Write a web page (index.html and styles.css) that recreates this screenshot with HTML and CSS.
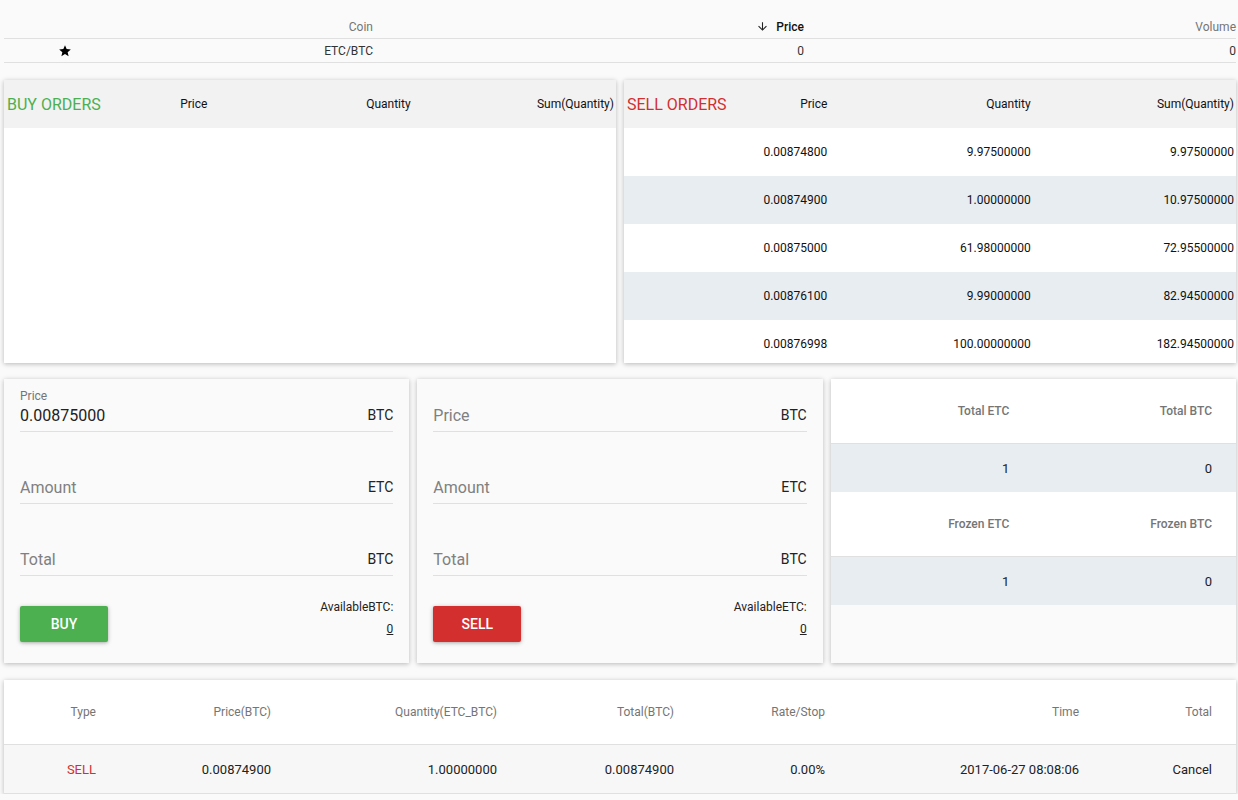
FILE: index.html
```html
<!DOCTYPE html>
<html>
<head>
<meta charset="utf-8">
<link rel="stylesheet" href="styles.css">
</head>
<body>
<div class="page">
  <div class="market">
    <div class="market-row market-head">
      <div class="mc star-col"></div>
      <div class="mc">Coin</div>
      <div class="mc sorted"><svg class="arrow" viewBox="0 0 24 24" width="13" height="13"><path d="M20 12l-1.41-1.41L13 16.17V4h-2v12.17l-5.58-5.59L4 12l8 8 8-8z"/></svg>Price</div>
      <div class="mc">Volume</div>
    </div>
    <div class="market-row market-body">
      <div class="mc star-col"><svg viewBox="0 0 24 24" width="14" height="14"><path d="M12 17.27L18.18 21l-1.64-7.03L22 9.24l-7.19-.61L12 2 9.19 8.63 2 9.24l5.46 4.73L5.82 21z"/></svg></div>
      <div class="mc">ETC/BTC</div>
      <div class="mc">0</div>
      <div class="mc">0</div>
    </div>
  </div>

  <div class="orders">
    <div class="card book">
      <div class="book-row book-head">
        <div class="bc first"><span class="title buy">BUY ORDERS</span><span>Price</span></div>
        <div class="bc">Quantity</div>
        <div class="bc">Sum(Quantity)</div>
      </div>
    </div>
    <div class="card book">
      <div class="book-row book-head">
        <div class="bc first"><span class="title sell">SELL ORDERS</span><span>Price</span></div>
        <div class="bc">Quantity</div>
        <div class="bc">Sum(Quantity)</div>
      </div>
      <div class="book-row"><div class="bc">0.00874800</div><div class="bc">9.97500000</div><div class="bc">9.97500000</div></div>
      <div class="book-row alt"><div class="bc">0.00874900</div><div class="bc">1.00000000</div><div class="bc">10.97500000</div></div>
      <div class="book-row"><div class="bc">0.00875000</div><div class="bc">61.98000000</div><div class="bc">72.95500000</div></div>
      <div class="book-row alt"><div class="bc">0.00876100</div><div class="bc">9.99000000</div><div class="bc">82.94500000</div></div>
      <div class="book-row"><div class="bc">0.00876998</div><div class="bc">100.00000000</div><div class="bc">182.94500000</div></div>
    </div>
  </div>

  <div class="trade">
    <div class="card form">
      <div class="field">
        <div class="label">Price</div>
        <div class="field-row"><span class="value">0.00875000</span><span class="unit">BTC</span></div>
      </div>
      <div class="field">
        <div class="label"></div>
        <div class="field-row"><span class="placeholder">Amount</span><span class="unit">ETC</span></div>
      </div>
      <div class="field">
        <div class="label"></div>
        <div class="field-row"><span class="placeholder">Total</span><span class="unit">BTC</span></div>
      </div>
      <div class="actions">
        <button class="btn btn-buy">BUY</button>
        <div class="avail"><div>AvailableBTC:</div><div class="amt">0</div></div>
      </div>
    </div>
    <div class="card form">
      <div class="field">
        <div class="label"></div>
        <div class="field-row"><span class="placeholder">Price</span><span class="unit">BTC</span></div>
      </div>
      <div class="field">
        <div class="label"></div>
        <div class="field-row"><span class="placeholder">Amount</span><span class="unit">ETC</span></div>
      </div>
      <div class="field">
        <div class="label"></div>
        <div class="field-row"><span class="placeholder">Total</span><span class="unit">BTC</span></div>
      </div>
      <div class="actions">
        <button class="btn btn-sell">SELL</button>
        <div class="avail"><div>AvailableETC:</div><div class="amt">0</div></div>
      </div>
    </div>
    <div class="card balance">
      <div class="bal-row bal-head"><div>Total ETC</div><div>Total BTC</div></div>
      <div class="bal-row bal-data"><div>1</div><div>0</div></div>
      <div class="bal-row bal-head"><div>Frozen ETC</div><div>Frozen BTC</div></div>
      <div class="bal-row bal-data"><div>1</div><div>0</div></div>
    </div>
  </div>

  <div class="card open-orders">
    <div class="oo-row oo-head">
      <div>Type</div><div>Price(BTC)</div><div>Quantity(ETC_BTC)</div><div>Total(BTC)</div><div>Rate/Stop</div><div>Time</div><div>Total</div>
    </div>
    <div class="oo-row oo-data">
      <div class="red">SELL</div><div>0.00874900</div><div>1.00000000</div><div>0.00874900</div><div>0.00%</div><div>2017-06-27 08:08:06</div><div>Cancel</div>
    </div>
  </div>
</div>
</body>
</html>
```
FILE: styles.css
```css
* { box-sizing: border-box; }
html, body { margin: 0; padding: 0; }
body {
  background: #fafafa;
  font-family: Roboto, "Liberation Sans", sans-serif;
  color: #333;
}
.page { padding: 15px 2px 0 4px; }

.card {
  background: #fafafa;
  box-shadow: 0 1px 6px rgba(0,0,0,0.14), 0 1px 4px rgba(0,0,0,0.14);
}

/* market table */
.market-row {
  display: grid;
  grid-template-columns: 122px 247px 431px 432px;
  height: 24px;
  border-bottom: 1px solid #e0e0e0;
  align-items: center;
  font-size: 12px;
}
.mc { text-align: right; }
.market-head .mc { color: #757575; }
.market-head .sorted { color: #111; font-weight: 500; display: flex; justify-content: flex-end; align-items: center; gap: 7px; }
.arrow { fill: #222; }
.star-col { text-align: center; display: flex; justify-content: center; align-items: center; }
.star-col svg { fill: #000; }
.market-body .mc { color: #333; }

/* orders books */
.orders {
  display: grid;
  grid-template-columns: 1fr 1fr;
  gap: 8px;
  margin-top: 17px;
}
.book {
  height: 283px;
  overflow: hidden;
  background: #fff;
}
.book-row {
  display: grid;
  grid-template-columns: 1fr 1fr 1fr;
  padding-right: 2px;
  height: 48px;
  align-items: center;
  font-size: 12px;
  color: #111;
}
.book-row.alt { background: #e7edf1; }
.book-head { background: #f2f2f2; }
.bc { text-align: right; }
.bc.first { display: flex; justify-content: space-between; align-items: center; padding-left: 3px; }
.title { font-size: 16px; }
.title.buy { color: #4caf50; }
.title.sell { color: #d32f2f; }

/* trade forms */
.trade {
  display: grid;
  grid-template-columns: 1fr 1fr 1fr;
  gap: 8px;
  margin-top: 16px;
}
.form {
  height: 284px;
  padding: 5px 16px 0;
}
.field {
  height: 48px;
  padding-top: 5px;
  border-bottom: 1px solid #e0e0e0;
  margin-bottom: 24px;
}
.field:nth-child(3) { margin-bottom: 30px; }
.label { height: 14px; line-height: 14px; font-size: 12px; color: #757575; }
.field-row { height: 24px; display: flex; justify-content: space-between; align-items: center; }
.value { font-size: 16px; color: #222; }
.placeholder { font-size: 16px; color: #808080; }
.unit { font-size: 14px; color: #222; }
.actions { display: flex; justify-content: space-between; align-items: flex-start; }
.btn {
  width: 88px;
  height: 36px;
  border: none;
  border-radius: 2px;
  color: #fff;
  font-family: Roboto, "Liberation Sans", sans-serif;
  font-size: 14px;
  font-weight: 500;
  box-shadow: 0 1px 5px rgba(0,0,0,0.2), 0 1px 3px rgba(0,0,0,0.15);
}
.btn-buy { background: #4caf50; }
.btn-sell { background: #d32f2f; }
.avail { text-align: right; font-size: 12px; line-height: 22px; color: #222; margin-top: -10px; }
.amt { text-decoration: underline; }

/* balance */
.balance { height: 284px; }
.bal-row {
  display: grid;
  grid-template-columns: 1fr 1fr;
  padding-right: 24px;
}
.bal-row > div { text-align: right; }
.bal-head {
  height: 65px;
  border-bottom: 1px solid #e0e0e0;
  background: #fff;
  align-items: center;
  font-size: 12px;
  font-weight: 500;
  color: #757575;
}
.bal-row > div:first-child { padding-right: 12px; }
.bal-data {
  height: 48px;
  align-items: center;
  background: #e7edf1;
  font-size: 13px;
  color: #222;
}

/* open orders */
.open-orders { margin-top: 17px; background: #fff; }
.oo-row {
  display: grid;
  grid-template-columns: 116px 175px 226px 177px 151px 254px 133px;
  align-items: center;
}
.oo-row > div { text-align: right; padding-right: 24px; }
.oo-head { height: 65px; border-bottom: 1px solid #e0e0e0; font-size: 12px; color: #757575; }
.oo-data { height: 49px; border-bottom: 1px solid #e0e0e0; background: #f7f7f7; font-size: 13px; color: #222; }
.red { color: #d32f2f; }
```
